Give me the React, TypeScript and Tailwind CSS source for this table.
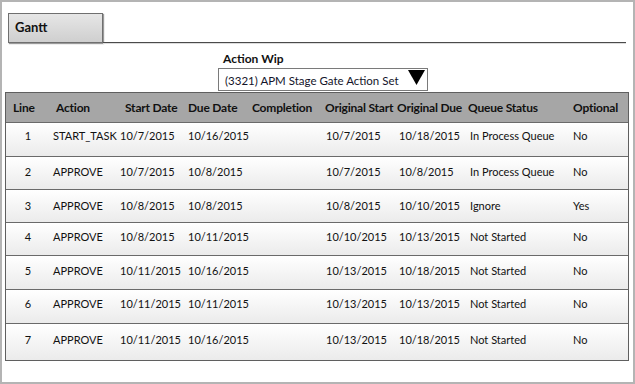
import React from "react";

type Row = {
  line: string;
  action: string;
  start: string;
  due: string;
  origStart: string;
  origDue: string;
  status: string;
  optional: string;
  pt: string;
};

const rows: Row[] = [
  { line: "1", action: "START_TASK", start: "10/7/2015", due: "10/16/2015", origStart: "10/7/2015", origDue: "10/18/2015", status: "In Process Queue", optional: "No", pt: "pt-[5px]" },
  { line: "2", action: "APPROVE", start: "10/7/2015", due: "10/8/2015", origStart: "10/7/2015", origDue: "10/8/2015", status: "In Process Queue", optional: "No", pt: "pt-[7px]" },
  { line: "3", action: "APPROVE", start: "10/8/2015", due: "10/8/2015", origStart: "10/8/2015", origDue: "10/10/2015", status: "Ignore", optional: "Yes", pt: "pt-[8px]" },
  { line: "4", action: "APPROVE", start: "10/8/2015", due: "10/11/2015", origStart: "10/10/2015", origDue: "10/13/2015", status: "Not Started", optional: "No", pt: "pt-[6px]" },
  { line: "5", action: "APPROVE", start: "10/11/2015", due: "10/16/2015", origStart: "10/13/2015", origDue: "10/18/2015", status: "Not Started", optional: "No", pt: "pt-[7px]" },
  { line: "6", action: "APPROVE", start: "10/11/2015", due: "10/11/2015", origStart: "10/13/2015", origDue: "10/13/2015", status: "Not Started", optional: "No", pt: "pt-[6px]" },
  { line: "7", action: "APPROVE", start: "10/11/2015", due: "10/16/2015", origStart: "10/13/2015", origDue: "10/18/2015", status: "Not Started", optional: "No", pt: "pt-[8px]" },
];

const heights = ["h-[34px]", "h-[33px]", "h-[33px]", "h-[33px]", "h-[34px]", "h-[34px]", "h-[36px]"];

export default function App() {
  return (
    <div
      className="w-[635px] h-[384px] bg-white border-2 border-[#b4b4b4] text-[11px] text-[#111] overflow-hidden whitespace-nowrap"
      style={{ fontFamily: "Lato, 'Open Sans', sans-serif" }}
    >
      {/* tab strip */}
      <div className="flex items-end pl-[6px] pr-[7px] pt-[11px]">
        <div className="w-[95px] h-[30px] bg-gradient-to-b from-[#e6e6e6] to-[#cfcfcf] border border-[#6f6f6f] shadow-[1px_1px_1px_#9a9a9a] flex items-center pl-[6px] font-bold text-[13px]">
          Gantt
        </div>
        <div className="flex-1 border-b border-[#4a4a4a] shadow-[0_1px_0_#dcdcdc]" />
      </div>

      {/* picker */}
      <div className="pl-[221px] pt-[9px]">
        <div className="font-bold leading-[14px] text-[12px]">Action Wip</div>
        <div className="mt-[2px] ml-[-5px] w-[210px] h-[23px] border border-[#7a7a7a] flex items-center justify-between pl-[6px] pr-[2px] text-[11.5px] text-[#14142a]">
          <span className="pt-[3px]">(3321) APM Stage Gate Action Set</span>
          <svg width="17" height="15" viewBox="0 0 17 15" className="mb-[5px]">
            <polygon points="0,0 17,0 8.5,15" fill="#000" />
          </svg>
        </div>
      </div>

      {/* table */}
      <div className="ml-[3px] mr-[4px] mt-[1px] border border-[#5f5f5f]">
        <div className="flex h-[30px] items-center bg-[#a6a6a6] font-bold text-[12px] tracking-[-0.2px] border-b border-[#6a6a6a]">
          <div className="w-[44px] pl-[7px]">Line</div>
          <div className="w-[68px] pl-[6px]">Action</div>
          <div className="w-[68px] pl-[7px]">Start Date</div>
          <div className="w-[64px] pl-[2px]">Due Date</div>
          <div className="w-[72px] pl-[2px]">Completion</div>
          <div className="w-[73px] pl-[3px]">Original Start</div>
          <div className="w-[71px] pl-[2px]">Original Due</div>
          <div className="w-[102px] pl-[2px]">Queue Status</div>
          <div className="flex-1 pl-[5px]">Optional</div>
        </div>
        {rows.map((r, i) => (
          <div
            key={r.line}
            className={`flex ${heights[i]} ${r.pt} bg-gradient-to-b from-white to-[#ebebeb] ${i < rows.length - 1 ? "border-b border-[#6a6a6a]" : ""}`}
          >
            <div className="w-[44px] text-center">{r.line}</div>
            <div className="w-[68px] pl-[3px]">{r.action}</div>
            <div className="w-[68px] pl-[2px]">{r.start}</div>
            <div className="w-[64px] pl-[2px]">{r.due}</div>
            <div className="w-[72px]"></div>
            <div className="w-[73px] pl-[4px]">{r.origStart}</div>
            <div className="w-[71px] pl-[4px]">{r.origDue}</div>
            <div className="w-[102px] pl-[4px]">{r.status}</div>
            <div className="flex-1 pl-[5px]">{r.optional}</div>
          </div>
        ))}
      </div>
    </div>
  );
}
